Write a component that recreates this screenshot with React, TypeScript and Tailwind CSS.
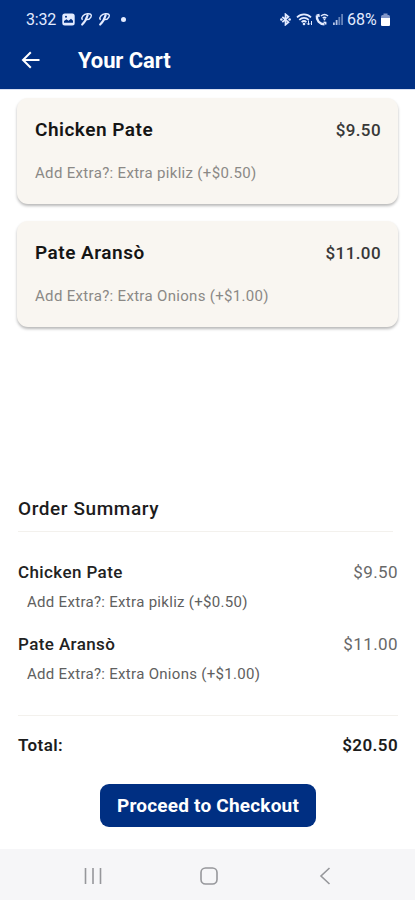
import type { ReactNode } from "react";

interface CartItem {
  id: number;
  name: string;
  price: string;
  extra: string;
}

const items: CartItem[] = [
  { id: 1, name: "Chicken Pate", price: "$9.50", extra: "Add Extra?: Extra pikliz (+$0.50)" },
  { id: 2, name: "Pate Aransò", price: "$11.00", extra: "Add Extra?: Extra Onions (+$1.00)" },
];

function PaymentIcon() {
  return (
    <svg className="h-[14px] w-[13px]" viewBox="0 0 13 14" fill="none" stroke="currentColor" strokeLinecap="round">
      <path d="M2.2 7.4C1 5.4 3.4 2.2 7.4 1.8c3.6-.4 4.6 1.4 3.5 3.3C10 6.8 8 7.8 6.2 7.6" strokeWidth="1.4" />
      <path d="M7.6 3.2C6.6 6.5 5 10 2.2 12.5" strokeWidth="2.2" />
    </svg>
  );
}

function StatusBar() {
  return (
    <div className="flex h-[38px] items-center pl-[26px] pr-[25px] text-[#e3ebff]">
      <span className="w-[31px] whitespace-nowrap pt-px text-[16px] tracking-[-0.2px]">3:32</span>
      <svg className="ml-[5px] h-[13px] w-[13px]" viewBox="0 0 13 13">
        <rect x="0.3" y="0.5" width="12.4" height="12" rx="2.5" fill="currentColor" />
        <path d="M2 9.8V8l2.5-1.8 2 1.6L9 5.8l2 2v2z" fill="#002f82" />
        <circle cx="4" cy="3.8" r="1" fill="#002f82" />
      </svg>
      <div className="ml-[5px] flex gap-[5px]">
        <PaymentIcon />
        <PaymentIcon />
      </div>
      <span className="ml-[10px] h-[5px] w-[5px] rounded-full bg-current" />
      <div className="ml-auto flex items-center">
        <svg className="h-[13px] w-[11px]" viewBox="0 0 11 13" fill="none" stroke="currentColor" strokeWidth="1.7">
          <path d="M2.3 3.8l6.2 5.4-3 2.5V1.3l3 2.5-6.2 5.4" />
          <circle cx="1.4" cy="6.5" r="1.3" fill="currentColor" stroke="none" />
          <circle cx="9.6" cy="6.5" r="1.3" fill="currentColor" stroke="none" />
        </svg>
        <svg className="ml-[5px] h-[13px] w-[17px]" viewBox="0 0 17 13" fill="none" stroke="currentColor" strokeWidth="1.7">
          <path d="M1 4.3C5 .3 11 .3 15 4.3M3.3 6.8c2.7-2.7 6.7-2.7 9.4 0M5.6 9.1c1.4-1.3 3.4-1.3 4.8 0" />
          <circle cx="8" cy="11" r="1.3" fill="currentColor" stroke="none" />
          <path d="M12.5 7.5v4.3M11 10.3l1.500 1.700L14 10.300M15.500 12V8" strokeWidth="1" />
        </svg>
        <svg className="ml-[2px] h-[13px] w-[14px]" viewBox="0 0 14 13" fill="none" stroke="currentColor">
          <path d="M1.8 2.5C1.3 7.5 4.5 11 9.5 11.3" strokeWidth="2.3" />
          <path d="M1.5 2.2l2.2-.4.4 2.2M8.5 9.3l2.1.2.1 2" strokeWidth="1.6" />
          <path d="M6 3c2-1.7 5-1.7 7 0M7.8 5.2c1-.9 2.4-.9 3.4 0" strokeWidth="1.6" />
          <circle cx="9.5" cy="6.5" r="0.9" fill="currentColor" stroke="none" />
        </svg>
        <svg className="ml-[4px] h-[12px] w-[10px]" viewBox="0 0 10 12" fill="currentColor">
          <path d="M0 9.5h1.800V12H0zM2.700 7h1.800v5H2.700z" opacity="0.8" />
          <path d="M5.4 4h1.800v8H5.400zM8.200 1H10v11H8.200z" opacity="0.45" />
        </svg>
        <span className="ml-[4px] w-[33px] whitespace-nowrap pt-px text-[16px]">68%</span>
        <svg className="ml-[1px] h-[13px] w-[9px]" viewBox="0 0 9 13">
          <rect x="2.5" y="0.5" width="4" height="2" fill="#8297c9" />
          <rect x="0" y="2" width="9" height="11" rx="1.5" fill="#8297c9" />
          <path d="M0 5h9v6.500A1.500 1.500 0 0 1 7.500 13h-6A1.500 1.500 0 0 1 0 11.500z" fill="#fff" />
        </svg>
      </div>
    </div>
  );
}

function Header() {
  return (
    <header className="h-[89px] shrink-0 bg-[#002f82]">
      <StatusBar />
      <div className="flex h-[44px] items-center pl-[21px] text-white">
        <svg className="h-[18px] w-[20px]" viewBox="0 0 20 18" fill="none" stroke="currentColor" strokeWidth="2">
          <path d="M18.5 9H2M9.8 1.2L2 9l7.800 7.800" />
        </svg>
        <h1 className="ml-[37px] pt-px text-[22px] font-bold tracking-[-0.1px]">Your Cart</h1>
      </div>
    </header>
  );
}

function CartCard({ item }: { item: CartItem }) {
  return (
    <div className="h-[106px] rounded-[11px] bg-[#f9f6f1] pl-[18px] pr-[17px] pt-[20px] shadow-[0_2px_3px_rgba(0,0,0,0.28)]">
      <div className="flex h-6 items-center justify-between">
        <h2 className="text-[19px] font-semibold leading-6 tracking-[0.5px] text-[#151515]">{item.name}</h2>
        <span className="text-[17px] font-medium leading-6 tracking-[0.4px] text-[#383838]">{item.price}</span>
      </div>
      <p className="mt-[19px] text-[15px] leading-6 tracking-[0.32px] text-[#8b8986]">{item.extra}</p>
    </div>
  );
}

function SummaryRow({ item }: { item: CartItem }) {
  return (
    <div className="h-[72px]">
      <div className="flex h-6 items-center justify-between text-[17px]">
        <span className="font-medium tracking-[0.4px] text-[#222]">{item.name}</span>
        <span className="tracking-[0.4px] text-[#686868]">{item.price}</span>
      </div>
      <p className="mt-[5px] pl-[9px] text-[15px] leading-6 tracking-[0.3px] text-[#606060]">{item.extra}</p>
    </div>
  );
}

function NavButton({ children }: { children: ReactNode }) {
  return (
    <button className="flex h-6 w-6 items-center justify-center">
      <svg className="h-6 w-6" viewBox="0 0 24 24" fill="none" stroke="#96979b" strokeWidth="1.6">
        {children}
      </svg>
    </button>
  );
}

export default function App() {
  return (
    <div className="flex h-[900px] w-[415px] flex-col overflow-hidden bg-white font-['Roboto',sans-serif]">
      <Header />
      <main className="flex flex-1 flex-col border-t border-[#d8e0f2] pl-[18px] pr-[17px]">
        <div className="-ml-px flex h-[407px] flex-col gap-[17px] pt-[8px]">
          {items.map((item) => (
            <CartCard key={item.id} item={item} />
          ))}
        </div>
        <section>
          <h2 className="h-[34px] text-[19px] font-medium leading-6 tracking-[0.58px] text-[#1c1c1c]">Order Summary</h2>
          <div className="mr-[5px] h-px bg-[#f3f1ed]" />
          <div className="pt-[29px]">
            {items.map((item) => (
              <SummaryRow key={item.id} item={item} />
            ))}
          </div>
          <div className="mt-[10px] h-px bg-[#f3f1ed]" />
          <div className="mt-[17px] flex h-6 items-center justify-between pt-px text-[17px] tracking-[0.4px] text-[#1c1c1c]">
            <span className="font-semibold">Total:</span>
            <span className="font-semibold">$20.50</span>
          </div>
        </section>
        <button className="mt-[27px] h-[43px] w-[216px] self-center rounded-[9px] bg-[#002f82] pt-px text-[19px] font-bold tracking-[0.2px] text-white">
          Proceed to Checkout
        </button>
      </main>
      <nav className="flex h-[51px] shrink-0 items-center bg-[#f6f6f8] pl-[81px] pr-[78px] pt-[3px]">
        <div className="flex w-full justify-between">
          <NavButton>
            <path d="M4.5 4v16M12 4v16M19.5 4v16" />
          </NavButton>
          <NavButton>
            <rect x="4" y="4" width="16" height="16" rx="4.5" />
          </NavButton>
          <NavButton>
            <path d="M16.5 4L8 12l8.500 8" />
          </NavButton>
        </div>
      </nav>
    </div>
  );
}
